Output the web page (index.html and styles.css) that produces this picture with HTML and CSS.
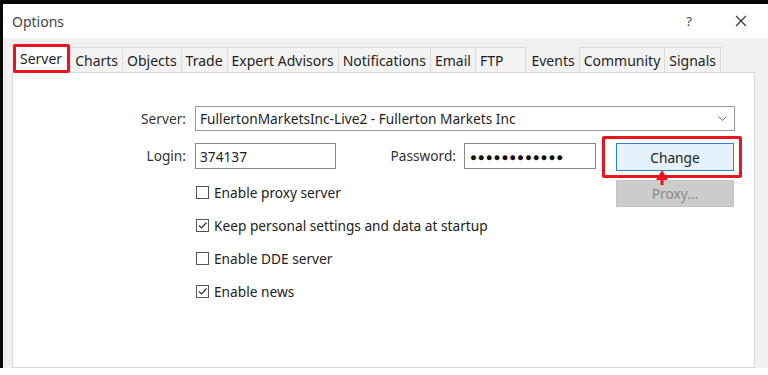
FILE: index.html
```html
<!DOCTYPE html>
<html>
<head>
<meta charset="utf-8">
<link rel="stylesheet" href="styles.css">
</head>
<body>
<div class="screen">
  <div class="window">
    <div class="titlebar">
      <span class="title">Options</span>
      <span class="help">?</span>
      <svg class="close" width="12" height="12" viewBox="0 0 12 12"><path d="M1 1L11 11M11 1L1 11" stroke="#333" stroke-width="1.2" fill="none"/></svg>
    </div>
    <div class="body">
      <div class="tabs">
        <div class="tab active">Server</div>
        <div class="tab">Charts</div>
        <div class="tab">Objects</div>
        <div class="tab">Trade</div>
        <div class="tab">Expert Advisors</div>
        <div class="tab">Notifications</div>
        <div class="tab">Email</div>
        <div class="tab ftp">FTP</div>
        <div class="tab plain">Events</div>
        <div class="tab">Community</div>
        <div class="tab">Signals</div>
      </div>
      <div class="panel">
        <div class="row row-server">
          <span class="lbl">Server:</span>
          <div class="combo">
            <span>FullertonMarketsInc-Live2 - Fullerton Markets Inc</span>
            <svg class="chev" width="9" height="6" viewBox="0 0 9 6"><path d="M0.5 0.5L4.5 4.5L8.5 0.5" stroke="#777" stroke-width="1" fill="none"/></svg>
          </div>
        </div>
        <div class="row row-login">
          <span class="lbl">Login:</span>
          <div class="input login">374137</div>
          <span class="pw-lbl">Password:</span>
          <div class="input pw">●●●●●●●●●●●●</div>
          <div class="btn-wrap">
            <div class="btn change">Change</div>
            <svg class="arrow" width="12" height="15" viewBox="0 0 12 15"><path d="M6 0L12 10H7.5V15H4.5V10H0Z" fill="#e8141e"/></svg>
          </div>
        </div>
        <div class="lower">
          <div class="checks">
            <div class="check"><span class="box"></span>Enable proxy server</div>
            <div class="check"><span class="box on"><svg width="11" height="11" viewBox="0 0 11 11"><path d="M2 5.5L4.5 8L9.5 2.5" stroke="#333" stroke-width="1.2" fill="none"/></svg></span>Keep personal settings and data at startup</div>
            <div class="check"><span class="box"></span>Enable DDE server</div>
            <div class="check"><span class="box on"><svg width="11" height="11" viewBox="0 0 11 11"><path d="M2 5.5L4.5 8L9.5 2.5" stroke="#333" stroke-width="1.2" fill="none"/></svg></span>Enable news</div>
          </div>
          <div class="btn proxy">Proxy...</div>
        </div>
      </div>
    </div>
  </div>
</div>
</body>
</html>
```

FILE: styles.css
```css
* { box-sizing: border-box; }
html, body { margin: 0; padding: 0; background: #fff; }
body { font-family: "Noto Sans", "Open Sans", sans-serif; font-size: 13.7px; color: #1e1e1e; }
.screen { width: 768px; height: 375px; overflow: hidden; }
.window {
  height: 368px;
  border-top: 4px solid #050505;
  border-left: 3px solid #0a0a0a;
  background: #f0f0f0;
  display: flex;
  flex-direction: column;
}
.titlebar {
  height: 34px;
  background: #fff;
  display: flex;
  align-items: center;
  padding-left: 9px;
}
.title { font-size: 14px; color: #444; flex: 1; margin-top: 1px; }
.help { font-size: 13px; color: #444; margin-right: 43px; }
.close { margin-right: 21px; }
.body { flex: 1; display: flex; flex-direction: column; padding: 0 13px 0 9px; }
.tabs { display: flex; align-items: flex-end; height: 34px; }
.tab {
  height: 25px;
  padding: 0 4px;
  border: 1px solid #dadada;
  border-bottom: none;
  margin-right: -1px;
  background: #f3f3f3;
  display: flex;
  align-items: center;
  font-size: 14px;
  color: #1e1e1e;
  white-space: nowrap;
}
.tab.active {
  position: relative;
  height: 28px;
  background: #fff;
  margin-left: 1px;
  padding: 0 6px 0 6px;
  margin-right: 1px;
  z-index: 1;
}
.tab.active::after {
  content: "";
  position: absolute;
  left: -1px; top: -1px; right: -2px; bottom: -1px;
  border: 3px solid #e8141e;
  border-radius: 2px;
}
.tab.ftp { padding-right: 22px; }
.tab.plain { border-color: transparent; background: transparent; padding-left: 5px; }
.panel {
  flex: 1;
  background: #fff;
  border: 1px solid #dadada;
  padding-top: 33px;
}
.row { display: flex; align-items: center; }
.lbl { width: 182px; text-align: right; padding-right: 9px; color: #333; }
.combo {
  width: 540px;
  height: 25px;
  border: 1px solid #9a9a9a;
  display: flex;
  align-items: center;
  justify-content: space-between;
  padding: 0 7px 0 4px;
}
.row-login { margin-top: 12px; align-items: flex-start; }
.row-login .lbl, .row-login .pw-lbl { line-height: 26px; }
.input { height: 26px; border: 1px solid #8a8a8a; display: flex; align-items: center; padding-left: 4px; }
.login { width: 141px; }
.pw-lbl { width: 128px; text-align: right; padding-right: 8px; color: #333; }
.pw { width: 132px; font-size: 11.5px; letter-spacing: 0.9px; color: #111; padding-left: 5px; }
.btn-wrap { position: relative; margin-left: 20px; }
.btn-wrap::before {
  content: "";
  position: absolute;
  left: -14px; top: -7px; right: -8px; bottom: -7px;
  border: 3px solid #e8141e;
  border-radius: 2px;
}
.btn { width: 118px; display: flex; align-items: center; justify-content: center; }
.change { height: 28px; background: #e5f1fb; border: 1px solid #2a84d2; color: #222; }
.arrow { position: absolute; left: 40px; top: 27px; }
.lower { display: flex; margin-top: 5px; }
.checks { margin-left: 183px; width: 420px; }
.check { height: 33px; display: flex; align-items: center; color: #222; }
.box {
  width: 13px; height: 13px;
  border: 1px solid #555;
  margin-right: 5px;
  display: flex; align-items: center; justify-content: center;
}
.proxy {
  margin-top: 4px;
  height: 27px;
  background: #cccccc;
  border: 1px solid #c4c4c4;
  color: #8a8a8a;
}
```
